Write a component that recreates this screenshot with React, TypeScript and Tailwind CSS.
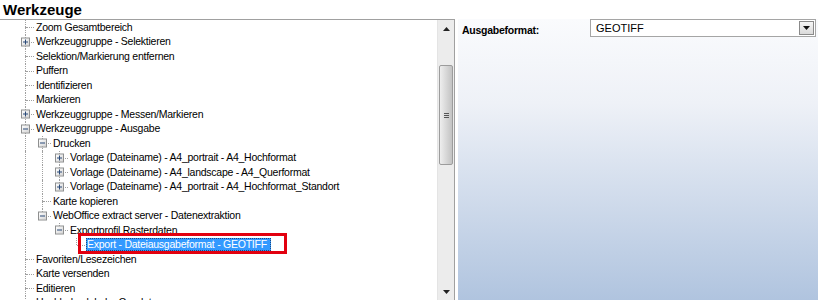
import React from "react";

type Row = {
  level: number;
  text: string;
  exp?: "plus" | "minus";
  anc: boolean[];
  last?: boolean;
  selected?: boolean;
};

const rows: Row[] = [
  { level: 0, text: "Zoom Gesamtbereich", anc: [] },
  { level: 0, text: "Werkzeuggruppe - Selektieren", anc: [], exp: "plus" },
  { level: 0, text: "Selektion/Markierung entfernen", anc: [] },
  { level: 0, text: "Puffern", anc: [] },
  { level: 0, text: "Identifizieren", anc: [] },
  { level: 0, text: "Markieren", anc: [] },
  { level: 0, text: "Werkzeuggruppe - Messen/Markieren", anc: [], exp: "plus" },
  { level: 0, text: "Werkzeuggruppe - Ausgabe", anc: [], exp: "minus" },
  { level: 1, text: "Drucken", anc: [true], exp: "minus" },
  { level: 2, text: "Vorlage (Dateiname) - A4_portrait - A4_Hochformat", anc: [true, true], exp: "plus" },
  { level: 2, text: "Vorlage (Dateiname) - A4_landscape - A4_Querformat", anc: [true, true], exp: "plus" },
  { level: 2, text: "Vorlage (Dateiname) - A4_portrait - A4_Hochformat_Standort", anc: [true, true], exp: "plus", last: true },
  { level: 1, text: "Karte kopieren", anc: [true] },
  { level: 1, text: "WebOffice extract server - Datenextraktion", anc: [true], exp: "minus", last: true },
  { level: 2, text: "Exportprofil Rasterdaten", anc: [true, false], exp: "minus", last: true },
  { level: 3, text: "Export - Dateiausgabeformat - GEOTIFF", anc: [true, false, false], last: true, selected: true },
  { level: 0, text: "Favoriten/Lesezeichen", anc: [] },
  { level: 0, text: "Karte versenden", anc: [] },
  { level: 0, text: "Editieren", anc: [] },
  { level: 0, text: "Hochladen lokaler Geodaten", anc: [] },
];

function Expander({ kind }: { kind: "plus" | "minus" }) {
  return (
    <div className="absolute left-[4px] top-1/2 -translate-y-1/2 w-[9px] h-[9px] border border-[#8e8f8f] bg-gradient-to-br from-white to-[#d4d4d4] flex items-center justify-center">
      <svg width="7" height="7" viewBox="0 0 7 7">
        <rect x="1" y="3" width="5" height="1" fill="#2a4a78" />
        {kind === "plus" && <rect x="3" y="1" width="1" height="5" fill="#2a4a78" />}
      </svg>
    </div>
  );
}

function TreeRow({ row }: { row: Row }) {
  return (
    <div className="relative flex items-center h-[14.5px] pl-[17px] whitespace-nowrap">
      {row.anc.map((c, i) => (
        <div key={i} className="relative w-[17px] h-full shrink-0">
          {c && <div className="absolute left-[8px] top-0 bottom-0 border-l border-dotted border-[#a0a0a0]" />}
        </div>
      ))}
      <div className="relative w-[17px] h-full shrink-0">
        <div className="absolute left-[8px] top-0 h-1/2 border-l border-dotted border-[#a0a0a0]" />
        {!row.last && <div className="absolute left-[8px] top-1/2 bottom-0 border-l border-dotted border-[#a0a0a0]" />}
        <div className="absolute left-[9px] right-0 top-1/2 border-t border-dotted border-[#a0a0a0]" />
        {row.exp && <Expander kind={row.exp} />}
      </div>
      {row.selected ? (
        <span className="ml-[1px] pl-[1px] pr-[4px] h-[13px] leading-[13px] bg-[#3399ff] text-white outline outline-1 outline-dotted outline-[#1d4a80] -outline-offset-1">
          {row.text}
        </span>
      ) : (
        <span className="ml-[1px] px-[1px] leading-[13px] text-black">{row.text}</span>
      )}
      {row.selected && (
        <div className="absolute left-[78px] top-[-5px] w-[209px] h-[21px] border-[3px] border-[#e2000f]" />
      )}
    </div>
  );
}

function Scrollbar() {
  return (
    <div className="w-[17px] shrink-0 flex flex-col bg-[#ececec] border-l border-[#e4e4e4]">
      <div className="h-[17px] flex items-center justify-center">
        <svg width="7" height="4" viewBox="0 0 7 4">
          <path d="M0 4 L3.5 0 L7 4 Z" fill="#222" />
        </svg>
      </div>
      <div className="h-[28px]" />
      <div className="h-[100px] mx-[1px] rounded-[2px] border border-[#9c9c9c] bg-gradient-to-r from-[#eeeeee] to-[#c3c3c3] flex items-center justify-center">
        <div className="flex flex-col gap-[1px]">
          <div className="w-[5px] h-[1px] bg-[#555]" />
          <div className="w-[5px] h-[1px] bg-[#555]" />
          <div className="w-[5px] h-[1px] bg-[#555]" />
        </div>
      </div>
      <div className="flex-1" />
      <div className="h-[17px] flex items-center justify-center">
        <svg width="7" height="4" viewBox="0 0 7 4">
          <path d="M0 0 L7 0 L3.5 4 Z" fill="#222" />
        </svg>
      </div>
    </div>
  );
}

export default function App() {
  return (
    <div className="w-[818px] h-[300px] overflow-hidden bg-white flex flex-col font-['Liberation_Sans',Arial,sans-serif] text-[10.5px] tracking-[-0.25px] text-black">
      <div className="h-[19px] leading-[19px] pl-[3px] text-[15px] tracking-normal font-bold shrink-0">Werkzeuge</div>
      <div className="flex flex-1 min-h-0">
        <div className="w-[455px] shrink-0 border-t border-r border-[#a0a0a0] flex">
          <div className="flex-1 overflow-hidden">
            {rows.map((r, i) => (
              <TreeRow key={i} row={r} />
            ))}
          </div>
          <Scrollbar />
        </div>
        <div className="w-[3px] shrink-0" />
        <div className="flex-1 flex items-start bg-[linear-gradient(180deg,#fafbfd_0%,#eef1f7_30%,#b0c4df_100%)]">
          <div className="w-[132px] pl-[4px] mt-[5px] leading-[13px] font-bold">Ausgabeformat:</div>
          <div className="w-[226px] h-[18px] border border-[#a5a5a5] bg-white flex items-center">
            <span className="flex-1 pl-[5px] leading-[13px] text-[11px] tracking-normal">GEOTIFF</span>
            <div className="w-[15px] h-[14px] mr-[1px] border border-[#8a8a8a] bg-gradient-to-b from-[#f6f6f6] to-[#dadada] flex items-center justify-center">
              <svg width="7" height="4" viewBox="0 0 7 4">
                <path d="M0 0 L7 0 L3.5 4 Z" fill="#111" />
              </svg>
            </div>
          </div>
        </div>
      </div>
    </div>
  );
}
